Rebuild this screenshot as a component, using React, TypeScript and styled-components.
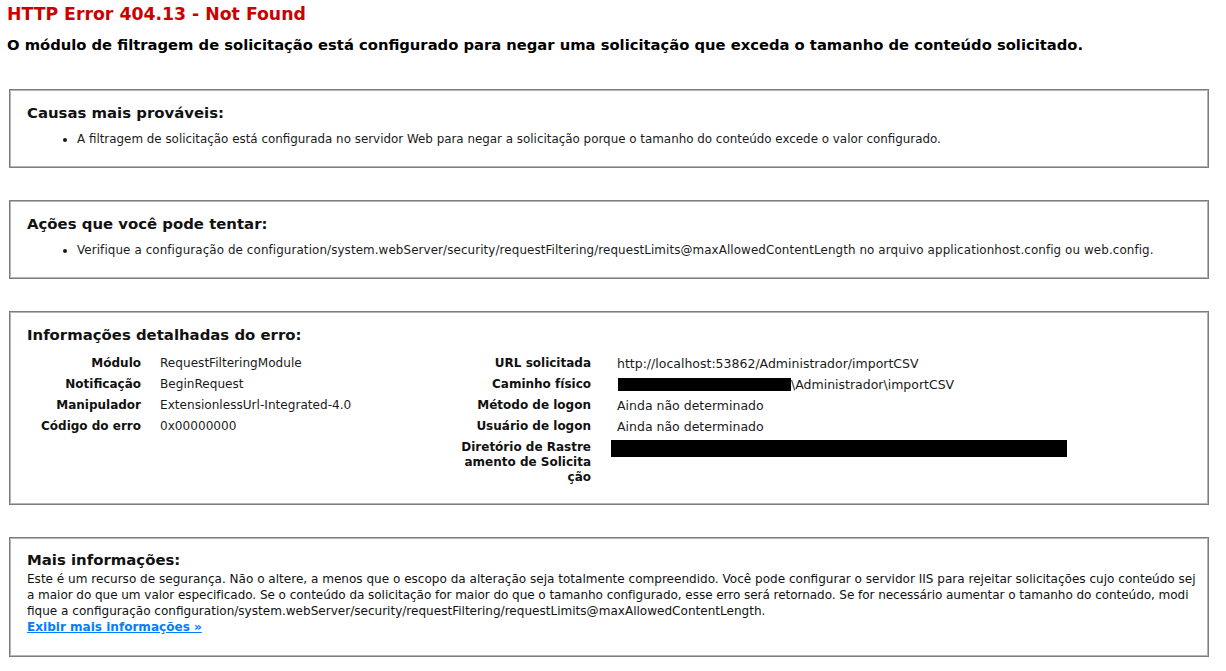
import React from "react";
import styled, { createGlobalStyle } from "styled-components";

const GlobalStyle = createGlobalStyle`
  html, body {
    margin: 0;
    padding: 0;
    background: #ffffff;
  }
  body {
    font-family: "DejaVu Sans", Verdana, sans-serif;
    font-size: 12px;
    color: #000000;
  }
`;

const Page = styled.div`
  padding: 4px 0 0 7px;
  width: 1210px;
`;

const Title = styled.h3`
  margin: 0;
  font-size: 17.3px;
  line-height: 20px;
  font-weight: bold;
  color: #cc0000;
`;

const Subtitle = styled.h4`
  margin: 12px 0 35px 0;
  font-size: 14.75px;
  line-height: 18px;
  font-weight: bold;
  color: #000000;
`;

const Box = styled.div<{ $pt: number; $pb: number }>`
  margin: 0 0 32px 2px;
  width: 1200px;
  box-sizing: border-box;
  border: 1px solid #7c7c7c;
  box-shadow: inset 0 0 0 1px #b4b4b4;
  padding: ${(p) => p.$pt}px 16px ${(p) => p.$pb}px 17px;
`;

const BoxHeading = styled.h4<{ $mb: number }>`
  margin: 0 0 ${(p) => p.$mb}px 0;
  font-size: 14.9px;
  line-height: 18px;
  font-weight: bold;
  color: #111111;
`;

const List = styled.ul`
  margin: 0;
  padding: 0 0 0 50px;
  font-size: 11.9px;
  line-height: 15px;
  color: #1a1a1a;
`;

const Details = styled.div`
  display: grid;
  grid-template-columns: 418px 1fr;
`;

const DetailTable = styled.div<{ $labelW: number; $gap: number }>`
  display: grid;
  grid-template-columns: ${(p) => p.$labelW}px 1fr;
  column-gap: ${(p) => p.$gap}px;
  align-content: start;
`;

const Label = styled.div`
  padding: 3px 0;
  text-align: right;
  font-weight: bold;
  font-size: 12px;
  line-height: 15px;
  color: #111111;
`;

const Value = styled.div<{ $size: number }>`
  padding: 3px 0;
  font-size: ${(p) => p.$size}px;
  line-height: 15px;
  color: #1a1a1a;
  white-space: nowrap;
  display: flex;
  align-items: flex-start;
`;

const Redacted = styled.span<{ $w: number; $h: number; $shift: number; $top: number }>`
  display: inline-block;
  width: ${(p) => p.$w}px;
  height: ${(p) => p.$h}px;
  margin-left: ${(p) => p.$shift}px;
  margin-top: ${(p) => p.$top}px;
  background: #000000;
  flex: none;
`;

const Line = styled.span<{ $spacing?: number }>`
  display: block;
  white-space: nowrap;
  letter-spacing: ${(p) => p.$spacing ?? 0}px;
`;

const Para = styled.div`
  font-size: 12.05px;
  line-height: 16px;
  color: #111111;
`;

const MoreLink = styled.a`
  display: block;
  color: #007eff;
  font-weight: bold;
  text-decoration: underline;
  line-height: 16px;
`;

type Row = { label: React.ReactNode; value: React.ReactNode };

const leftRows: Row[] = [
  { label: "Módulo", value: "RequestFilteringModule" },
  { label: "Notificação", value: "BeginRequest" },
  { label: "Manipulador", value: "ExtensionlessUrl-Integrated-4.0" },
  { label: "Código do erro", value: "0x00000000" },
];

const rightRows: Row[] = [
  { label: "URL solicitada", value: "http://localhost:53862/Administrador/importCSV" },
  {
    label: "Caminho físico",
    value: (
      <>
        <Redacted $w={173} $h={13} $shift={1} $top={1} />
        \Administrador\importCSV
      </>
    ),
  },
  { label: "Método de logon", value: "Ainda não determinado" },
  { label: "Usuário de logon", value: "Ainda não determinado" },
  {
    label: (
      <>
        <Line>Diretório de Rastre</Line>
        <Line>amento de Solicita</Line>
        <Line>ção</Line>
      </>
    ),
    value: <Redacted $w={456} $h={17} $shift={-6} $top={0} />,
  },
];

function Table({
  rows,
  labelW,
  gap,
  size,
}: {
  rows: Row[];
  labelW: number;
  gap: number;
  size: number;
}) {
  return (
    <DetailTable $labelW={labelW} $gap={gap}>
      {rows.map((r, i) => (
        <React.Fragment key={i}>
          <Label>{r.label}</Label>
          <Value $size={size}>{r.value}</Value>
        </React.Fragment>
      ))}
    </DetailTable>
  );
}

export default function App() {
  return (
    <>
      <GlobalStyle />
      <Page>
        <Title>HTTP Error 404.13 - Not Found</Title>
        <Subtitle>
          O módulo de filtragem de solicitação está configurado para negar uma solicitação que
          exceda o tamanho de conteúdo solicitado.
        </Subtitle>

        <Box $pt={14} $pb={20}>
          <BoxHeading $mb={10}>Causas mais prováveis:</BoxHeading>
          <List>
            <li>
              A filtragem de solicitação está configurada no servidor Web para negar a solicitação
              porque o tamanho do conteúdo excede o valor configurado.
            </li>
          </List>
        </Box>

        <Box $pt={14} $pb={20}>
          <BoxHeading $mb={10}>Ações que você pode tentar:</BoxHeading>
          <List>
            <li>
              <Line $spacing={0.1}>
                Verifique a configuração de
                configuration/system.webServer/security/requestFiltering/requestLimits@maxAllowedContentLength
                no arquivo applicationhost.config ou web.config.
              </Line>
            </li>
          </List>
        </Box>

        <Box $pt={14} $pb={16}>
          <BoxHeading $mb={9}>Informações detalhadas do erro:</BoxHeading>
          <Details>
            <Table rows={leftRows} labelW={114} gap={19} size={12.1} />
            <Table rows={rightRows} labelW={146} gap={26} size={12.5} />
          </Details>
        </Box>

        <Box $pt={13} $pb={21}>
          <BoxHeading $mb={2}>Mais informações:</BoxHeading>
          <Para>
            <Line>
              Este é um recurso de segurança. Não o altere, a menos que o escopo da alteração seja
              totalmente compreendido. Você pode configurar o servidor IIS para rejeitar solicitações
              cujo conteúdo sej
            </Line>
            <Line $spacing={-0.06}>
              a maior do que um valor especificado. Se o conteúdo da solicitação for maior do que o
              tamanho configurado, esse erro será retornado. Se for necessário aumentar o tamanho do
              conteúdo, modi
            </Line>
            <Line>
              fique a configuração
              configuration/system.webServer/security/requestFiltering/requestLimits@maxAllowedContentLength.
            </Line>
            <MoreLink href="#">Exibir mais informações »</MoreLink>
          </Para>
        </Box>
      </Page>
    </>
  );
}
